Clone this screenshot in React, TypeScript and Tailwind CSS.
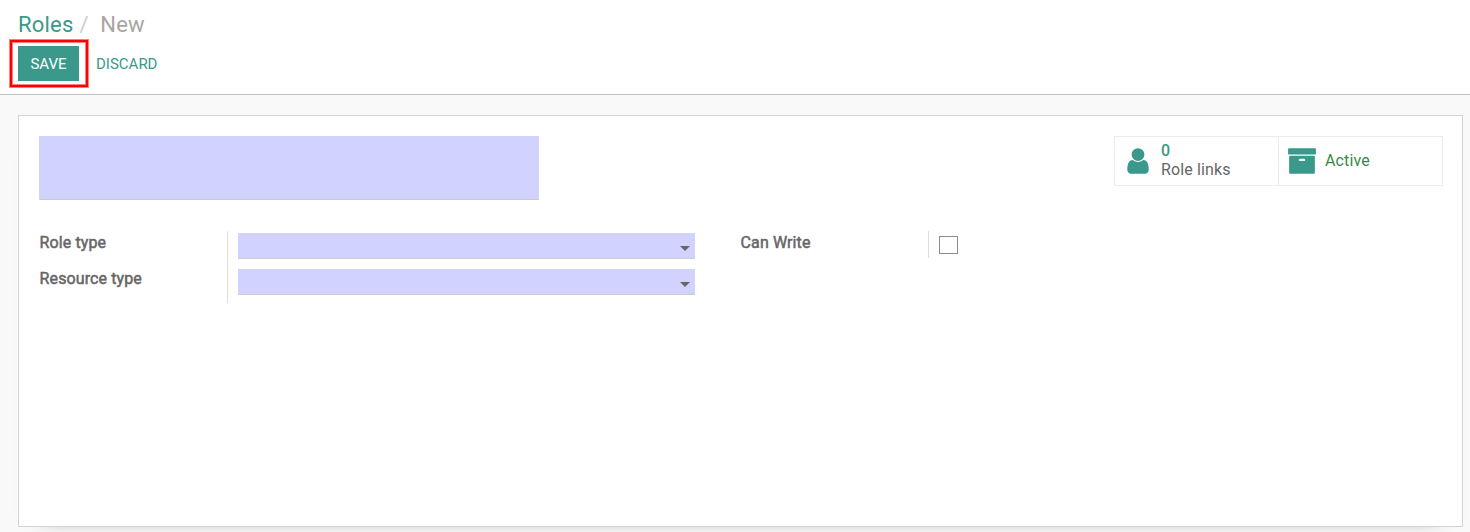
import React from "react";

const USER =
  "M1536 1399q0 109-62.5 187t-150.5 78h-854q-88 0-150.5-78t-62.5-187q0-85 8.5-160.5t31.5-152 58.5-131 94-89 134.5-34.5q131 128 313 128t313-128q76 0 134.5 34.5t94 89 58.5 131 31.5 152 8.5 160.5zm-256-887q0 159-112.5 271.5t-271.5 112.5-271.5-112.5-112.5-271.5 112.5-271.5 271.5-112.5 271.5 112.5 112.5 271.5z";
const ARCHIVE =
  "M1088 832q0-26-19-45t-45-19h-256q-26 0-45 19t-19 45 19 45 45 19h256q26 0 45-19t19-45zm576-192v960q0 26-19 45t-45 19h-1408q-26 0-45-19t-19-45v-960q0-26 19-45t45-19h1408q26 0 45 19t19 45zm64-448v256q0 26-19 45t-45 19h-1536q-26 0-45-19t-19-45v-256q0-26 19-45t45-19h1536q26 0 45 19t19 45z";

function Icon({ path }: { path: string }) {
  return (
    <svg viewBox="0 0 1792 1792" className="size-[30px] shrink-0 fill-[#3a998a]">
      <path d={path} />
    </svg>
  );
}

function Label({ children }: { children: React.ReactNode }) {
  return (
    <label className="block h-9 pl-[0.6px] pt-[3px] leading-[18px] tracking-[0.1px] text-[#666666] [-webkit-text-stroke:0.5px_#666666]">
      {children}
    </label>
  );
}

function SelectField() {
  return (
    <div className="flex h-[26px] w-[457px] justify-end border-b border-[#cccccc] bg-[#d2d2ff] pr-[5px] pt-[13px]">
      <svg viewBox="0 0 10 5" className="h-[5px] w-[10px] fill-[#666666]">
        <path d="M0 0h10L5 5z" />
      </svg>
    </div>
  );
}

export default function App() {
  return (
    <div className="flex h-[532px] flex-col overflow-hidden bg-[#f9f9f9] font-['Roboto',sans-serif] text-base text-[#666666]">
      <header className="h-[95px] shrink-0 border-b border-[#c3c3c3] bg-white pl-[18px]">
        <nav className="flex h-[46px] items-center pt-[3px] text-[22px] leading-8 tracking-[0.2px]">
          <a className="text-[#3a998a]">Roles</a>
          <span className="pl-1.5 text-[#cccccc]">/</span>
          <span className="pl-[11.5px] text-[#aaa5a0]">New</span>
        </nav>
        <div className="flex text-[15px] leading-[37px]">
          <div className="relative">
            <button className="block h-[35px] w-[61px] bg-[#3a998a] text-center text-white">SAVE</button>
            <svg
              viewBox="0 0 80 49"
              className="pointer-events-none absolute -left-[9px] -top-[7px] h-[49px] w-[80px] fill-none"
            >
              <rect x="2" y="2" width="76" height="45" stroke="#ff0000" strokeOpacity="0.5" strokeWidth="4" />
              <rect x="2" y="2" width="76" height="45" stroke="#ff0000" strokeWidth="2" />
            </svg>
          </div>
          <button className="h-[35px] pl-[17px] text-[#3a998a]">DISCARD</button>
        </div>
      </header>
      <main className="pl-[18px] pt-5">
        <section className="h-[412px] w-[1445px] border border-[#d3d3d3] bg-white pl-5 pr-[19px] pt-5 shadow-[0_16px_20px_-26px_rgba(0,0,0,0.5)]">
          <div className="flex items-start justify-between">
            <div className="h-16 w-[500px] border-b border-[#cccccc] bg-[#d2d2ff]" />
            <div className="flex h-[50px] w-[329px] border border-[#ececec]">
              <div className="flex w-[163px] items-center pl-2">
                <Icon path={USER} />
                <div className="-mt-0.5 pl-2 leading-[19px] tracking-[0.12px]">
                  <div className="font-medium text-[#3a998a]">0</div>
                  <div>Role links</div>
                </div>
              </div>
              <div className="flex flex-1 items-center border-l border-[#ececec] pl-2">
                <Icon path={ARCHIVE} />
                <span className="pl-2 tracking-[0.12px] text-[#378b45]">Active</span>
              </div>
            </div>
          </div>
          <div className="flex pt-[31px]">
            <div className="flex w-[701px]">
              <div className="w-[188px]">
                <Label>Role type</Label>
                <Label>Resource type</Label>
              </div>
              <div className="flex h-[72px] flex-col gap-2.5 border-l border-[#dddddd] pl-2.5 pt-0.5">
                <SelectField />
                <SelectField />
              </div>
            </div>
            <div className="w-[188px]">
              <Label>Can Write</Label>
            </div>
            <div className="h-[27px] border-l border-[#dddddd] pl-2.5 pt-[5px]">
              <div className="h-[18px] w-[19px] border border-[#8c8c8c] bg-white" />
            </div>
          </div>
        </section>
      </main>
    </div>
  );
}
